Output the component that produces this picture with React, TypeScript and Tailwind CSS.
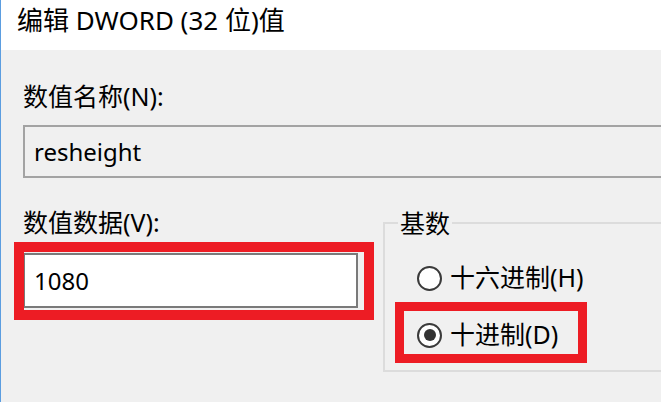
export default function App() {
  const font = { fontFamily: '"Noto Sans", "Noto Sans CJK SC", sans-serif' };
  return (
    <div
      className="relative h-[402px] w-[661px] overflow-hidden border-l border-[#5b9de0] bg-[#f0f0f0] text-black"
      style={font}
    >
      {/* 标题栏 */}
      <div className="h-[50px] bg-white pl-[16px] pt-[5px] text-[26px] leading-[30px]">
        编辑 DWORD (32 位)值
      </div>

      <div className="pl-[22px]">
        <div className="mt-[34px] text-[25px] leading-[24px]">数值名称(N):</div>
        <div className="mt-[17px] flex h-[53px] w-[700px] items-center border-2 border-[#a3a3a3] bg-[#f0f0f0] pl-[9px] text-[24px]">
          resheight
        </div>

        <div className="mt-[32px] flex">
          <div className="w-[335px] shrink-0">
            <div className="text-[25px] leading-[24px]">数值数据(V):</div>
            <div className="mt-[19px] flex h-[55px] items-center border-2 border-[#7a7a7a] bg-white pl-[9px] text-[24px]">
              1080
            </div>
          </div>

          <div className="relative ml-[25px] mt-[12px] h-[150px] w-[320px] shrink-0 border-2 border-[#dcdcdc]">
            <div className="absolute left-[13px] top-[-13px] bg-[#f0f0f0] px-[2px] text-[25px] leading-[24px]">
              基数
            </div>
            <div className="mt-[39px] flex h-[30px] items-center gap-[8px] pl-[32px] text-[25px]">
              <span className="flex h-[25px] w-[25px] items-center justify-center rounded-full border-2 border-[#3a3a3a] bg-white" />
              十六进制(H)
            </div>
            <div className="mt-[27px] flex h-[30px] items-center gap-[8px] pl-[32px] text-[25px]">
              <span className="flex h-[25px] w-[25px] items-center justify-center rounded-full border-2 border-[#3a3a3a] bg-white">
                <span className="h-[12px] w-[12px] rounded-full bg-[#333]" />
              </span>
              十进制(D)
            </div>
          </div>
        </div>
      </div>

      {/* 红色标注框 */}
      <div className="absolute left-[13px] top-[242px] h-[78px] w-[360px] border-[10px] border-[#ed1c24]" />
      <div className="absolute left-[394px] top-[302px] h-[61px] w-[192px] border-[9px] border-[#ed1c24]" />
    </div>
  );
}
